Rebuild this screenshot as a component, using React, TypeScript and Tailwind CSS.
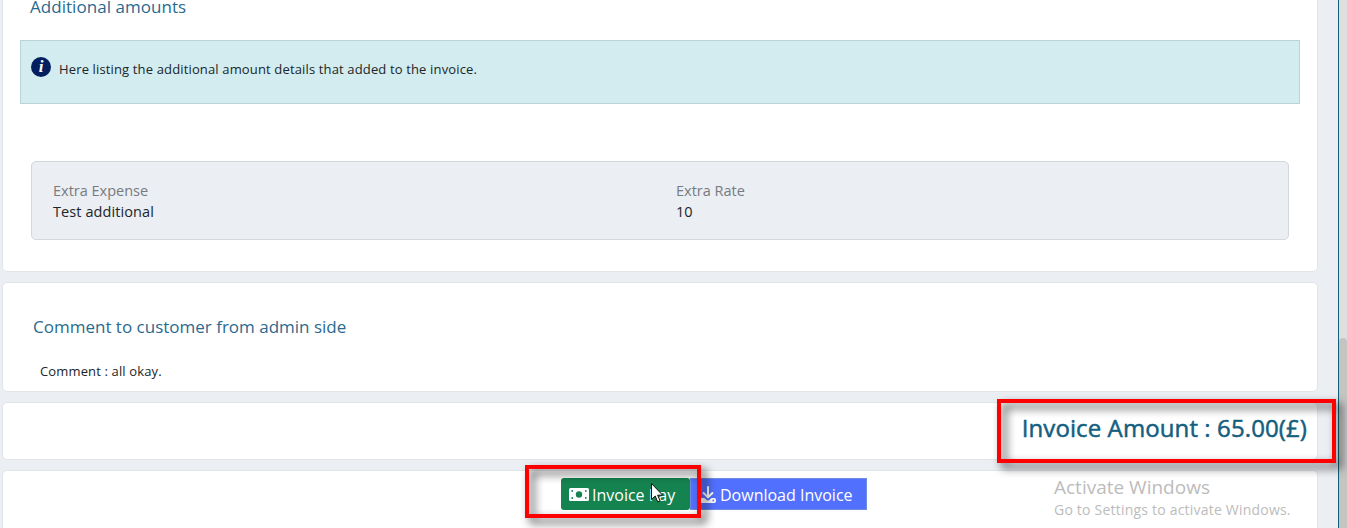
const card = "border border-[#e2e5e8] bg-white";

function BillIcon() {
  return (
    <svg className="h-[13px] w-5 shrink-0" viewBox="0 0 20 13">
      <rect width="20" height="13" rx="1.6" fill="#fff" />
      <circle cx="10" cy="6.5" r="3.2" fill="#15834f" />
      <g fill="#15834f">
        <circle cx="3.2" cy="3" r="0.9" />
        <circle cx="16.8" cy="3" r="0.9" />
        <circle cx="3.2" cy="10" r="0.9" />
        <circle cx="16.8" cy="10" r="0.9" />
      </g>
    </svg>
  );
}

function TrayIcon() {
  return (
    <svg className="h-[18px] w-4 shrink-0" viewBox="0 0 16 18">
      <path d="M8 1v10M3.6 7 8 11.4 12.4 7" fill="none" stroke="#fff" strokeWidth="2" strokeLinecap="round" strokeLinejoin="round" />
      <path d="M2 12h2.5L7 14.2q1 .8 2 0L11.500 12H14q2 0 2 2v1q0 2-2 2H2q-2 0-2-2v-1q0-2 2-2z" fill="#fff" />
      <circle cx="13.300" cy="14.500" r="0.9" fill="#5270fe" />
    </svg>
  );
}

export default function App() {
  return (
    <div className="relative flex h-[528px] w-[1347px] overflow-hidden bg-[#ebeef3] font-['Open_Sans','Noto_Sans',sans-serif] text-[#212529]">
      <main className="ml-0.5 flex w-[1316px] shrink-0 flex-col gap-[10px]">
        <section className={`${card} flex h-[272px] shrink-0 flex-col rounded-b-[5px] border-t-0`}>
          <h2 className="ml-[27px] mt-[-5px] h-6 whitespace-nowrap text-[17px] leading-6 tracking-[0.04px] text-[#2a6a8e]">Additional amounts</h2>
          <div className="ml-[17px] mt-[21px] flex h-16 w-[1280px] shrink-0 border border-[#bcd3d8] bg-[#d2ecf0] pl-[10px] pt-4">
            <div className="flex size-5 items-center justify-center rounded-full bg-[#02205f]">
              <span className="font-['Liberation_Serif',serif] text-[17px] font-bold italic leading-5 text-white">i</span>
            </div>
            <p className="ml-2 mt-0.5 whitespace-nowrap text-[13px] leading-5 tracking-[0.145px]">Here listing the additional amount details that added to the invoice.</p>
          </div>
          <div className="ml-7 mt-[57px] grid h-[79px] w-[1258px] shrink-0 grid-cols-[623px_1fr] rounded-[5px] border border-[#d3d8db] bg-[#ebeef3] pl-[21px] pt-[18px] text-[14.5px] leading-[21px]">
            <div className="flex flex-col items-start">
              <span className="text-[#777b80]">Extra Expense</span>
              <span className="tracking-[0.09px]">Test additional</span>
            </div>
            <div className="flex flex-col items-start">
              <span className="text-[#777b80]">Extra Rate</span>
              <span>10</span>
            </div>
          </div>
        </section>

        <section className={`${card} flex h-[110px] shrink-0 flex-col items-start rounded-[5px]`}>
          <h2 className="ml-[30px] mt-8 whitespace-nowrap text-[17px] leading-6 text-[#2a6a8e]">Comment to customer from admin side</h2>
          <p className="ml-[37px] mt-[22px] whitespace-nowrap text-[13px] leading-5 tracking-[0.14px]">Comment : all okay.</p>
        </section>

        <section className={`${card} flex h-[58px] shrink-0 items-start justify-end rounded-[5px] pr-[10px] pt-[9px]`}>
          <h1 className="whitespace-nowrap text-[24px] leading-8 tracking-[0.1px] text-[#145f80] [-webkit-text-stroke:0.5px_#145f80]">Invoice Amount : 65.00(£)</h1>
        </section>

        <section className={`${card} flex h-[80px] shrink-0 items-start rounded-[5px] pl-[558px] pt-[7px] text-[16px] leading-[30px] text-white`}>
          <button className="flex h-8 w-[129px] shrink-0 items-center rounded-[3px] bg-[#15834f] pl-2 pt-px">
            <BillIcon />
            <span className="ml-[3px] whitespace-nowrap">Invoice Pay</span>
          </button>
          <button className="flex h-8 w-[177px] shrink-0 items-center border border-[#6f8de0] bg-[#5270fe] pl-[9px] pt-px">
            <TrayIcon />
            <span className="ml-1 whitespace-nowrap">Download Invoice</span>
          </button>
        </section>
      </main>

      <aside className="ml-5 flex w-[9px] shrink-0 flex-col border-l border-[#145f78] bg-[#dfdfdf]">
        <div className="mt-[338px] flex-1 rounded-t-[4px] bg-[#c4c4c3]" />
      </aside>

      <div className="absolute left-[1054px] top-[475px] whitespace-nowrap text-[#bcbcbc]">
        <div className="text-[19px] leading-6">Activate Windows</div>
        <div className="mt-px text-[14px] leading-5 tracking-[0.21px]">Go to Settings to activate Windows.</div>
      </div>

      <svg className="absolute left-[651px] top-[483px] h-5 w-3" viewBox="0 0 12 20">
        <path d="M.5.5v16l3.7-3.5 2.5 5.8 2.400-1-2.500-5.600h5z" fill="#fff" stroke="#111" strokeWidth="1" />
      </svg>

      <div className="absolute left-[525px] top-[465px] h-[53px] w-[176px] border-4 border-[#fe0000] drop-shadow-[5px_5px_5px_rgba(0,0,0,0.75)]" />
      <div className="absolute left-[997px] top-[399px] h-[64px] w-[339px] border-4 border-[#fe0000] drop-shadow-[5px_5px_5px_rgba(0,0,0,0.75)]" />
    </div>
  );
}
